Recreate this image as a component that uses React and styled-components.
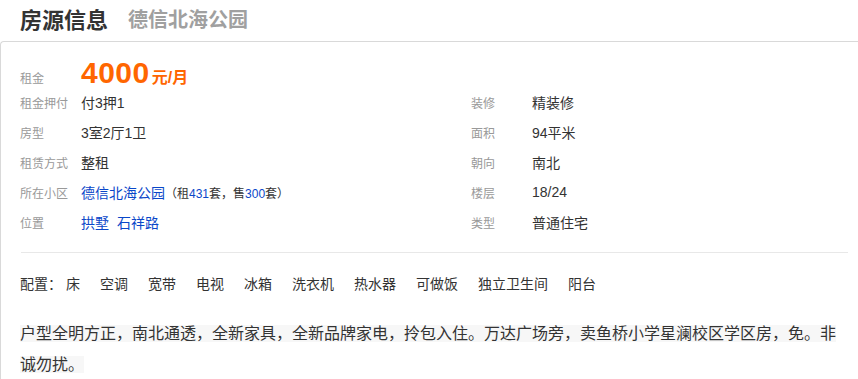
import React from 'react';
import styled, { createGlobalStyle } from 'styled-components';

const GlobalStyle = createGlobalStyle`
	body {
		margin: 0;
		background: #fff;
		font-family: "Liberation Sans", "Noto Sans CJK SC", sans-serif;
		color: #333;
	}
`;

const Header = styled.header`
	height: 41px;
	display: flex;
	align-items: center;
	padding: 0 0 5px 20px;
	box-sizing: border-box;
`;

const Title = styled.h2`
	margin: 0;
	font-size: 22px;
	font-weight: bold;
	color: #333;
`;

const SubTitle = styled.span`
	margin-left: 20px;
	font-size: 20px;
	font-weight: bold;
	color: #a0a0a0;
`;

const Panel = styled.section`
	border: 1px solid #d9d9d9;
	border-right: none;
	border-top-left-radius: 4px;
	padding: 17px 10px 0 19px;
`;

const RentRow = styled.div`
	display: flex;
	align-items: baseline;
	height: 28px;
	line-height: 28px;
`;

const Label = styled.span`
	width: 61px;
	flex-shrink: 0;
	font-size: 12px;
	color: #999;
`;

const Price = styled.strong`
	font-size: 30px;
	font-weight: bold;
	color: #ff6600;
	letter-spacing: 0.5px;
`;

const Unit = styled.span`
	margin-left: 2px;
	font-size: 16px;
	font-weight: bold;
	color: #ff6600;
`;

const InfoGrid = styled.div`
	display: grid;
	grid-template-columns: 451px 1fr;
	grid-auto-rows: 30px;
	padding-bottom: 15px;
	border-bottom: 1px solid #e8e8e8;
	margin-left: 1px;
`;

const Cell = styled.div`
	display: flex;
	align-items: center;
	margin-left: -1px;
	grid-column: ${p => p.col};
	grid-row: ${p => p.row};
`;

const Value = styled.span`
	font-size: 14px;
	color: #333;
`;

const Link = styled.a`
	font-size: 14px;
	color: #0a47c9;
	text-decoration: none;
	margin-right: ${p => (p.gap ? '8px' : '0')};
`;

const Count = styled.span`
	font-size: 12px;
	color: #333;
`;

const Num = styled.span`
	color: #0a47c9;
`;

const ConfigRow = styled.div`
	display: flex;
	align-items: center;
	height: 30px;
	margin-top: 15px;
	font-size: 14px;
	color: #333;
`;

const ConfigLabel = styled.span`
	margin-right: 4px;
`;

const ConfigItem = styled.span`
	margin-right: 20px;
`;

const Description = styled.p`
	margin: 20px 0 0;
	width: 828px;
	font-size: 16px;
	line-height: 31px;
	color: #333;
`;

const DescText = styled.span`
	background: #f7f7f7;
`;

const leftRows = [
	['租金押付', <Value>付3押1</Value>],
	['房型', <Value>3室2厅1卫</Value>],
	['租赁方式', <Value>整租</Value>],
	[
		'所在小区',
		<>
			<Link href="#">德信北海公园</Link>
			<Count>（租<Num>431</Num>套，售<Num>300</Num>套）</Count>
		</>,
	],
	[
		'位置',
		<>
			<Link href="#" gap>拱墅</Link>
			<Link href="#">石祥路</Link>
		</>,
	],
];

const rightRows = [
	['装修', '精装修'],
	['面积', '94平米'],
	['朝向', '南北'],
	['楼层', '18/24'],
	['类型', '普通住宅'],
];

const config = ['床', '空调', '宽带', '电视', '冰箱', '洗衣机', '热水器', '可做饭', '独立卫生间', '阳台'];

export default function App() {
	return (
		<>
			<GlobalStyle />
			<Header>
				<Title>房源信息</Title>
				<SubTitle>德信北海公园</SubTitle>
			</Header>
			<Panel>
				<RentRow>
					<Label>租金</Label>
					<Price>4000</Price>
					<Unit>元/月</Unit>
				</RentRow>
				<InfoGrid>
					{leftRows.map(([label, value], i) => (
						<Cell key={label} col={1} row={i + 1}>
							<Label>{label}</Label>
							{value}
						</Cell>
					))}
					{rightRows.map(([label, value], i) => (
						<Cell key={label} col={2} row={i + 1}>
							<Label>{label}</Label>
							<Value>{value}</Value>
						</Cell>
					))}
				</InfoGrid>
				<ConfigRow>
					<ConfigLabel>配置：</ConfigLabel>
					{config.map(item => (
						<ConfigItem key={item}>{item}</ConfigItem>
					))}
				</ConfigRow>
				<Description>
					<DescText>
						户型全明方正，南北通透，全新家具，全新品牌家电，拎包入住。万达广场旁，卖鱼桥小学星澜校区学区房，免。非诚勿扰。
					</DescText>
				</Description>
			</Panel>
		</>
	);
}
